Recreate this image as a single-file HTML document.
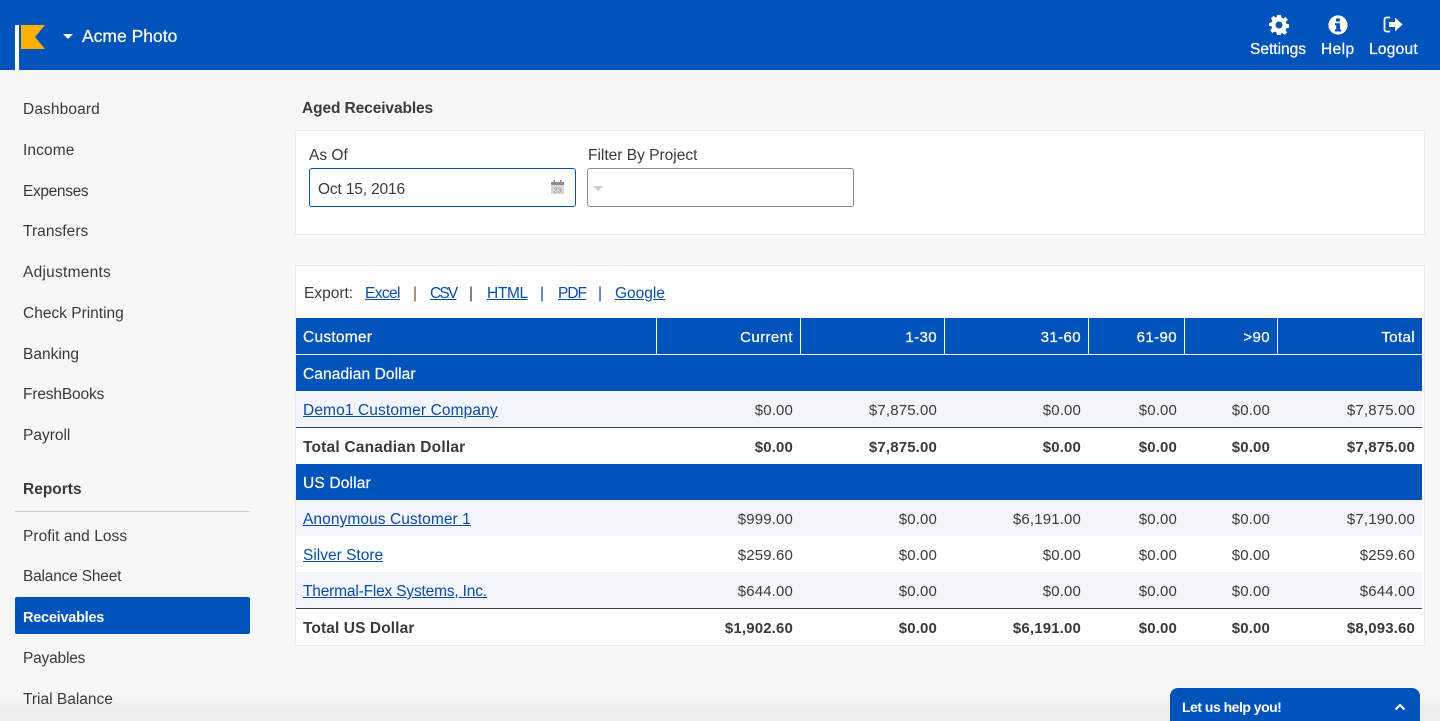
<!DOCTYPE html>
<html><head><meta charset="utf-8"><title>Aged Receivables</title>
<style>
*{box-sizing:border-box}
html,body{margin:0;padding:0;width:1440px;height:721px;overflow:hidden;background:#f7f7f7}
body{position:relative;font-family:"Liberation Sans",Arial,sans-serif;font-size:15.5px;color:#3a3a3c;letter-spacing:0}
.a{position:absolute;white-space:nowrap;line-height:20px;margin-top:2px}
.nav{left:23px}
a{color:#0a4ba8;text-decoration:underline}
.box{position:absolute;background:#fff;border:1px solid #ececec}
.bar{position:absolute;left:296px;width:1126px;background:#0053bb}
.row{position:absolute;left:296px;width:1126px;background:#f2f5fa}
.vl{position:absolute;top:318px;width:1px;height:36px;background:#fff}
.hl{position:absolute;left:296px;width:1126px;height:1px;background:#3f3f42}
.r{position:absolute;white-space:nowrap;line-height:20px;text-align:right;width:140px;letter-spacing:.15px;font-size:15px;margin-top:2px}
.b{font-weight:700}
.w{color:#fff;-webkit-text-stroke:.25px #fff}
.r.w{letter-spacing:.4px}
.c1{left:653px}.c2{left:797px}.c3{left:941px}.c4{left:1037px}.c5{left:1130px}.c6{left:1275px}
.n{margin-top:0}
</style></head><body>
<div style="position:absolute;left:0;top:0;width:1440px;height:70px;background:#0053bb"></div>
<div style="position:absolute;left:15px;top:25px;width:4px;height:45px;background:#fff"></div>
<svg style="position:absolute;left:21px;top:25px" width="24" height="24"><path d="M0 0H24L14 12L24 24H0Z" fill="#ffb000"/></svg>
<svg style="position:absolute;left:63px;top:34px" width="10" height="6"><path d="M0 0H10L5 5Z" fill="#fff"/></svg>
<div class="a w n" style="left:82px;top:25px;font-size:17.5px;line-height:22px;letter-spacing:0">Acme Photo</div>

<svg style="position:absolute;left:1269px;top:15px" width="20" height="20" viewBox="0 0 20 20"><path fill="#fff" fill-rule="evenodd" d="M8 0h4l.6 2.700 1.700.7L16.700 2l2.100 2.900-1.900 2 .4 1.700 2.700.7v3.400l-2.700.7-.7 1.700 1.500 2.400-2.800 2.400-2-1.800-1.800.6L12 20H8l-.6-2.700-1.700-.7L3.300 18 1.200 15.100l1.900-2-.4-1.700L0 10.700V8l2.700-.7.700-1.700L1.900 3.200 4.700.9l2 1.700 1-.3zM10 6.500a3.500 3.500 0 1 0 0 7 3.500 3.500 0 0 0 0-7z"/></svg>
<svg style="position:absolute;left:1328px;top:15px" width="20" height="20" viewBox="0 0 20 20"><circle cx="10" cy="10" r="9.600" fill="#fff"/><rect x="8" y="3.500" width="4" height="3" fill="#0053bb"/><path d="M7 8.200h5v6.300h1.200v2H7v-2h1.200v-4.300H7z" fill="#0053bb"/></svg>
<svg style="position:absolute;left:1383px;top:15px" width="20" height="20" viewBox="0 0 20 20"><path d="M7 2.500H3.500A2 2 0 0 0 1.500 4.500v10a2 2 0 0 0 2 2H7" fill="none" stroke="#fff" stroke-width="1.800"/><path d="M6 7h6V2.500L19.500 9.500 12 16.500V12H6z" fill="#fff"/></svg>
<div class="a w n" style="left:1250px;top:40px">Settings</div>
<div class="a w n" style="left:1321px;top:40px;letter-spacing:.4px">Help</div>
<div class="a w n" style="left:1369px;top:40px;letter-spacing:.25px">Logout</div>

<div style="position:absolute;left:0;top:695px;width:1440px;height:26px;background:linear-gradient(#f7f7f7,#eeeeee 45%,#ededed)"></div>

<div class="a nav" style="top:98px;letter-spacing:.12px">Dashboard</div>
<div class="a nav" style="top:139px;letter-spacing:.1px">Income</div>
<div class="a nav" style="top:180px;letter-spacing:-.35px">Expenses</div>
<div class="a nav" style="top:220px;letter-spacing:.05px">Transfers</div>
<div class="a nav" style="top:261px;letter-spacing:.25px">Adjustments</div>
<div class="a nav" style="top:302px">Check Printing</div>
<div class="a nav" style="top:343px">Banking</div>
<div class="a nav" style="top:383px;letter-spacing:-.15px">FreshBooks</div>
<div class="a nav" style="top:424px">Payroll</div>
<div class="a nav b" style="top:478px">Reports</div>
<div style="position:absolute;left:15px;top:511px;width:235px;height:1px;background:#cfcfcf"></div>
<div class="a nav" style="top:525px;letter-spacing:.05px">Profit and Loss</div>
<div class="a nav" style="top:565px;letter-spacing:-.2px">Balance Sheet</div>
<div style="position:absolute;left:15px;top:597px;width:235px;height:37px;background:#0053bb;border-radius:2px"></div>
<div class="a nav w" style="top:606px;font-weight:700;font-size:14.5px;letter-spacing:-.25px;-webkit-text-stroke:0">Receivables</div>
<div class="a nav" style="top:647px;letter-spacing:-.2px">Payables</div>
<div class="a nav" style="top:688px">Trial Balance</div>

<div class="a b" style="left:302px;top:97px;letter-spacing:-.1px">Aged Receivables</div>
<div class="box" style="left:295px;top:130px;width:1130px;height:105px"></div>
<div class="a" style="left:309px;top:144px">As Of</div>
<div class="a" style="left:588px;top:144px">Filter By Project</div>
<div style="position:absolute;left:309px;top:168px;width:267px;height:39px;background:#fff;border:1px solid #0053bb;border-radius:3px"></div>
<div class="a" style="left:318px;top:178px;letter-spacing:-.15px">Oct 15, 2016</div>
<svg style="position:absolute;left:550px;top:180px" width="16" height="15" viewBox="0 0 16 15"><rect x="1" y="2" width="13" height="12" fill="#dcd6dc"/><rect x="1" y="2" width="13" height="3" fill="#8f8a90"/><rect x="3.500" y="0" width="1.500" height="3" fill="#8f8a90"/><rect x="10" y="0" width="1.500" height="3" fill="#8f8a90"/><text x="7.500" y="12.500" font-size="7" text-anchor="middle" fill="#8f8a90" font-family="Liberation Sans" letter-spacing="0">23</text></svg>
<div style="position:absolute;left:587px;top:168px;width:267px;height:39px;background:#fff;border:1px solid #8a8a8e;border-radius:3px"></div>
<svg style="position:absolute;left:593px;top:186px" width="10" height="6"><path d="M0 0H10L5 5Z" fill="#ccc"/></svg>

<div class="box" style="left:295px;top:265px;width:1130px;height:381px"></div>
<div class="a" style="left:304px;top:282px">Export:</div>
<div class="a" style="left:365px;top:282px;letter-spacing:-.6px"><a>Excel</a></div>
<div class="a" style="left:413px;top:282px;color:#8a4a30">|</div>
<div class="a" style="left:430px;top:282px;letter-spacing:-1.800px"><a>CSV</a></div>
<div class="a" style="left:469px;top:282px">|</div>
<div class="a" style="left:487px;top:282px;letter-spacing:-.35px"><a>HTML</a></div>
<div class="a" style="left:540px;top:282px;color:#0a4ba8">|</div>
<div class="a" style="left:558px;top:282px;letter-spacing:-1px"><a>PDF</a></div>
<div class="a" style="left:598px;top:282px;color:#0a4ba8">|</div>
<div class="a" style="left:615px;top:282px"><a>Google</a></div>

<div class="bar" style="top:318px;height:36px"></div>
<div class="bar" style="top:355px;height:36px"></div>
<div class="vl" style="left:656px"></div><div class="vl" style="left:800px"></div><div class="vl" style="left:944px"></div><div class="vl" style="left:1088px"></div><div class="vl" style="left:1184px"></div><div class="vl" style="left:1277px"></div>
<div class="row" style="top:391px;height:36px"></div>
<div class="hl" style="top:427px"></div>
<div class="bar" style="top:464px;height:36px"></div>
<div class="row" style="top:500px;height:36px"></div>
<div class="row" style="top:572px;height:36px"></div>
<div class="hl" style="top:608px"></div>

<div class="a w" style="left:303px;top:326px;letter-spacing:.25px">Customer</div>
<div class="r w c1" style="top:326px">Current</div><div class="r w c2" style="top:326px">1-30</div><div class="r w c3" style="top:326px">31-60</div><div class="r w c4" style="top:326px">61-90</div><div class="r w c5" style="top:326px">&gt;90</div><div class="r w c6" style="top:326px">Total</div>
<div class="a w" style="left:303px;top:363px;letter-spacing:.1px">Canadian Dollar</div>

<div class="a" style="left:303px;top:399px;letter-spacing:.12px"><a>Demo1 Customer Company</a></div>
<div class="r c1" style="top:399px">$0.00</div><div class="r c2" style="top:399px">$7,875.00</div><div class="r c3" style="top:399px">$0.00</div><div class="r c4" style="top:399px">$0.00</div><div class="r c5" style="top:399px">$0.00</div><div class="r c6" style="top:399px">$7,875.00</div>

<div class="a b" style="left:303px;top:436px;letter-spacing:.2px">Total Canadian Dollar</div>
<div class="r b c1" style="top:436px">$0.00</div><div class="r b c2" style="top:436px">$7,875.00</div><div class="r b c3" style="top:436px">$0.00</div><div class="r b c4" style="top:436px">$0.00</div><div class="r b c5" style="top:436px">$0.00</div><div class="r b c6" style="top:436px">$7,875.00</div>

<div class="a w" style="left:303px;top:472px;letter-spacing:.17px">US Dollar</div>

<div class="a" style="left:303px;top:508px;letter-spacing:.08px"><a>Anonymous Customer 1</a></div>
<div class="r c1" style="top:508px">$999.00</div><div class="r c2" style="top:508px">$0.00</div><div class="r c3" style="top:508px">$6,191.00</div><div class="r c4" style="top:508px">$0.00</div><div class="r c5" style="top:508px">$0.00</div><div class="r c6" style="top:508px">$7,190.00</div>

<div class="a" style="left:303px;top:544px"><a>Silver Store</a></div>
<div class="r c1" style="top:544px">$259.60</div><div class="r c2" style="top:544px">$0.00</div><div class="r c3" style="top:544px">$0.00</div><div class="r c4" style="top:544px">$0.00</div><div class="r c5" style="top:544px">$0.00</div><div class="r c6" style="top:544px">$259.60</div>

<div class="a" style="left:303px;top:580px;letter-spacing:-.18px"><a>Thermal-Flex Systems, Inc.</a></div>
<div class="r c1" style="top:580px">$644.00</div><div class="r c2" style="top:580px">$0.00</div><div class="r c3" style="top:580px">$0.00</div><div class="r c4" style="top:580px">$0.00</div><div class="r c5" style="top:580px">$0.00</div><div class="r c6" style="top:580px">$644.00</div>

<div class="a b" style="left:303px;top:617px;letter-spacing:.1px">Total US Dollar</div>
<div class="r b c1" style="top:617px">$1,902.60</div><div class="r b c2" style="top:617px">$0.00</div><div class="r b c3" style="top:617px">$6,191.00</div><div class="r b c4" style="top:617px">$0.00</div><div class="r b c5" style="top:617px">$0.00</div><div class="r b c6" style="top:617px">$8,093.60</div>

<div style="position:absolute;left:1170px;top:688px;width:250px;height:33px;background:#0053bb;border-radius:8px 8px 0 0"></div>
<div class="a w n" style="left:1182px;top:697px;font-size:14px;font-weight:700;letter-spacing:-.5px;-webkit-text-stroke:0">Let us help you!</div>
<svg style="position:absolute;left:1394px;top:703px" width="12" height="8"><path d="M1.500 6.500L6 2l4.500 4.500" fill="none" stroke="#fff" stroke-width="2"/></svg>
</body></html>
